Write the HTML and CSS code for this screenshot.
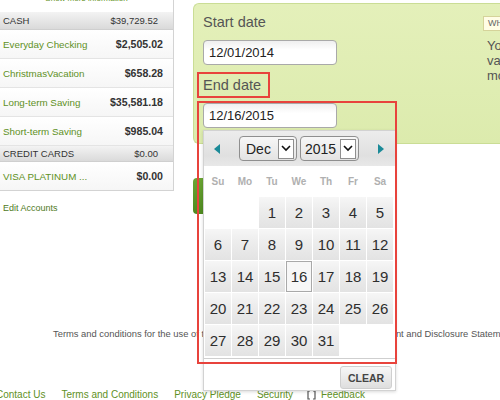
FILE: index.html
```html
<!DOCTYPE html>
<html>
<head>
<meta charset="utf-8">
<link rel="stylesheet" href="styles.css">
</head>
<body>
<div class="page">
  <div class="top">
    <aside class="sidebar">
      <div class="accounts">
        <div class="more">Show more information</div>
        <div class="group"><span>CASH</span><span>$39,729.52</span></div>
        <div class="acct"><a>Everyday Checking</a><b>$2,505.02</b></div>
        <div class="acct"><a>ChristmasVacation</a><b>$658.28</b></div>
        <div class="acct"><a>Long-term Saving</a><b>$35,581.18</b></div>
        <div class="acct"><a>Short-term Saving</a><b>$985.04</b></div>
        <div class="group short"><span>CREDIT CARDS</span><span>$0.00</span></div>
        <div class="acct last"><a>VISA PLATINUM ...</a><b>$0.00</b></div>
      </div>
      <a class="edit">Edit Accounts</a>
    </aside>
    <main class="main">
      <section class="panel">
        <div class="form">
          <div class="lbl">Start date</div>
          <div class="field">12/01/2014</div>
          <div class="lbl end">End date</div>
          <div class="field second">12/16/2015</div>
        </div>
        <div class="help">
          <span class="tag">WHAT IS THIS?</span>
          <p class="help-text">You can search<br>values within a<br>month range.</p>
        </div>
      </section>
      <div class="go"></div>
    </main>
  </div>
  <p class="terms">Terms and conditions for the use of this service are outlined in our Online Agreement and Disclosure Statement.</p>
  <nav class="links">
    <a class="contact">Contact Us</a>
    <a>Terms and Conditions</a>
    <a>Privacy Pledge</a>
    <a>Security</a>
    <a class="feedback"><svg class="fb-icon" width="9" height="10" viewBox="0 0 9 10"><path d="M3 1H1v8h2M6 1h2v8H6" fill="none" stroke="#555" stroke-width="1.2"/></svg>Feedback</a>
  </nav>

  <div class="picker">
    <div class="head">
      <svg class="arrow prev" width="6" height="10" viewBox="0 0 6 10"><path d="M6 0V10L0 5Z" fill="#1b8a98"/></svg>
      <div class="sel month"><span>Dec</span><i class="chev"><svg width="10" height="7" viewBox="0 0 10 7"><path d="M1 1l4 4 4-4" fill="none" stroke="#111" stroke-width="1.6"/></svg></i></div>
      <div class="sel year"><span>2015</span><i class="chev"><svg width="10" height="7" viewBox="0 0 10 7"><path d="M1 1l4 4 4-4" fill="none" stroke="#111" stroke-width="1.6"/></svg></i></div>
      <svg class="arrow next" width="6" height="10" viewBox="0 0 6 10"><path d="M0 0V10L6 5Z" fill="#1b8a98"/></svg>
    </div>
    <div class="dow"><span>Su</span><span>Mo</span><span>Tu</span><span>We</span><span>Th</span><span>Fr</span><span>Sa</span></div>
    <div class="days">
      <span class="empty"></span><span class="empty"></span>
      <span class="d">1</span><span class="d">2</span><span class="d">3</span><span class="d">4</span><span class="d">5</span>
      <span class="d">6</span><span class="d">7</span><span class="d">8</span><span class="d">9</span><span class="d">10</span><span class="d">11</span><span class="d">12</span>
      <span class="d">13</span><span class="d">14</span><span class="d">15</span><span class="d cur">16</span><span class="d">17</span><span class="d">18</span><span class="d">19</span>
      <span class="d">20</span><span class="d">21</span><span class="d">22</span><span class="d">23</span><span class="d">24</span><span class="d">25</span><span class="d">26</span>
      <span class="d">27</span><span class="d">28</span><span class="d">29</span><span class="d">30</span><span class="d">31</span><span class="empty"></span><span class="empty"></span>
    </div>
    <div class="pfoot"><button class="clear">CLEAR</button></div>
  </div>
  <div class="highlight"></div>
</div>
</body>
</html>
```

FILE: styles.css
```css
* { box-sizing: border-box; }
html, body { margin: 0; padding: 0; background: #fff; }
body {
  width: 500px;
  height: 400px;
  overflow: hidden;
  font-family: "Liberation Sans", Arial, sans-serif;
  color: #333;
}
a { color: #5f9125; text-decoration: none; }

.page { position: relative; width: 600px; }

.top { display: flex; align-items: flex-start; }

/* ---------- sidebar ---------- */
.sidebar { width: 174px; margin-top: -7px; }
.accounts {
  border-right: 1px solid #d3d3d3;
  border-bottom: 1px solid #d3d3d3;
}
.more {
  height: 19px;
  font-size: 8px;
  line-height: 12px;
  text-align: center;
  color: #5f9125;
}
.group {
  height: 18px;
  display: flex;
  align-items: center;
  justify-content: space-between;
  padding: 0 15px 0 3px;
  font-size: 9.5px;
  color: #333;
  background: linear-gradient(#f3f3f3, #dadada);
  border-bottom: 1px solid #cfcfcf;
}
.group.short { height: 16px; }
.acct {
  height: 29px;
  display: flex;
  align-items: center;
  justify-content: space-between;
  padding: 0 10px 0 3px;
  border-bottom: 1px solid #e4e4e4;
  background: linear-gradient(#ffffff, #f6f6f6);
}
.acct.last { height: 28px; border-bottom: none; }
.acct a { font-size: 9.8px; color: #5f9125; }
.acct b { font-size: 10.6px; color: #333; }
.edit {
  display: block;
  margin-top: 11px;
  padding-left: 3px;
  font-size: 9px;
  line-height: 12px;
  color: #4f7a1c;
}

/* ---------- main ---------- */
.main { margin-left: 19px; width: 407px; }
.panel {
  margin-top: 3px;
  display: flex;
  background: linear-gradient(#e4f0ba, #dcebad);
  border: 1px solid #cadd95;
  border-right: none;
  border-radius: 6px 0 0 6px;
  padding: 8px 0 15px 9px;
}
.form { width: 280px; display: flex; flex-direction: column; align-items: flex-start; }
.lbl { font-size: 14.5px; line-height: 20px; color: #555; }
.field {
  margin-top: 8px;
  width: 134px;
  height: 25px;
  border: 1px solid #a9a9a9;
  border-radius: 4px;
  background: linear-gradient(#efefef, #ffffff 40%);
  font-size: 13px;
  line-height: 23px;
  padding-left: 5px;
  color: #222;
}
.lbl.end {
  margin-top: 7px;
  margin-left: -6px;
  height: 26px;
  line-height: 22px;
  padding: 0 7px 0 4px;
  border: 2px solid #e8433c;
}
.field.second { margin-top: 5px; }

.help { flex: 1; }
.tag {
  display: inline-block;
  height: 15px;
  padding: 0 4px;
  font-size: 9px;
  line-height: 13px;
  color: #666;
  background: #fffde6;
  border: 1px solid #d5d39a;
  white-space: nowrap;
}
.help-text {
  margin: 7px 0 0 4px;
  font-size: 13px;
  line-height: 15px;
  color: #555;
  white-space: nowrap;
}

.go {
  margin-top: 34px;
  width: 40px;
  height: 36px;
  border-radius: 4px;
  background: linear-gradient(#6aa533, #4e8a1f);
}

/* ---------- footer ---------- */
.terms {
  margin: 113px 0 0 53px;
  font-size: 9.4px;
  line-height: 13px;
  color: #555;
  white-space: nowrap;
}
.links {
  margin: 48px 0 0 -4px;
  display: flex;
  gap: 16px;
  font-size: 10px;
  line-height: 14px;
  white-space: nowrap;
}
.links a { color: #5f9125; }
.feedback { display: flex; align-items: center; gap: 5px; margin-left: -2px; }

/* ---------- date picker (overlay) ---------- */
.picker {
  position: absolute;
  left: 203px;
  top: 130px;
  width: 193px;
  height: 261px;
  background: #fff;
  border: 1px solid #d2d2d2;
  box-shadow: 0 1px 3px rgba(0,0,0,0.15);
}
.head {
  height: 35px;
  display: flex;
  align-items: center;
  padding-left: 10px;
  background: linear-gradient(#ececec, #e0e0e0 70%, #e8e8e8);
}
.arrow { flex: none; }
.arrow.prev { margin-right: 19px; }
.arrow.next { margin-left: 19px; }
.sel {
  height: 25px;
  display: flex;
  align-items: center;
  justify-content: space-between;
  padding: 0 2px 0 6px;
  border: 1px solid #8f8f8f;
  border-radius: 4px;
  background: linear-gradient(#f7f7f7, #e3e3e3);
  font-size: 14px;
  color: #222;
}
.sel.month { width: 58px; }
.sel.year { width: 59px; margin-left: 3px; padding-left: 4px; }
.chev {
  width: 16px;
  height: 20px;
  display: flex;
  align-items: center;
  justify-content: center;
  background: #fff;
  border: 1px solid #8f8f8f;
}
.dow {
  height: 31px;
  display: grid;
  grid-template-columns: repeat(7, 26px);
  column-gap: 1px;
  padding-left: 1px;
  align-items: center;
  font-size: 10px;
  font-weight: bold;
  color: #b0b0b0;
}
.dow span { text-align: center; }
.days {
  display: grid;
  grid-template-columns: repeat(7, 26px);
  grid-auto-rows: 31px;
  gap: 1px;
  padding-left: 1px;
}
.d {
  display: flex;
  align-items: center;
  justify-content: center;
  font-size: 15px;
  color: #2e2e2e;
  background: linear-gradient(#f6f6f6, #ececec 45%, #e3e3e3);
}
.d.cur {
  background: #f7f7f7;
  box-shadow: inset 0 0 0 1px #a9a9a9;
}
.pfoot {
  margin-top: 2px;
  border-top: 1px solid #cfcfcf;
  display: flex;
  justify-content: flex-end;
  padding: 7px 3px 0 0;
}
.clear {
  width: 52px;
  height: 23px;
  padding: 0;
  border: 1px solid #cfcfcf;
  border-radius: 3px;
  background: linear-gradient(#f7f7f7, #dedede);
  font-family: inherit;
  font-size: 10.5px;
  font-weight: bold;
  color: #444;
}
.highlight {
  position: absolute;
  left: 197px;
  top: 101px;
  width: 200px;
  height: 263px;
  border: 2px solid #e8433c;
  pointer-events: none;
}
```
